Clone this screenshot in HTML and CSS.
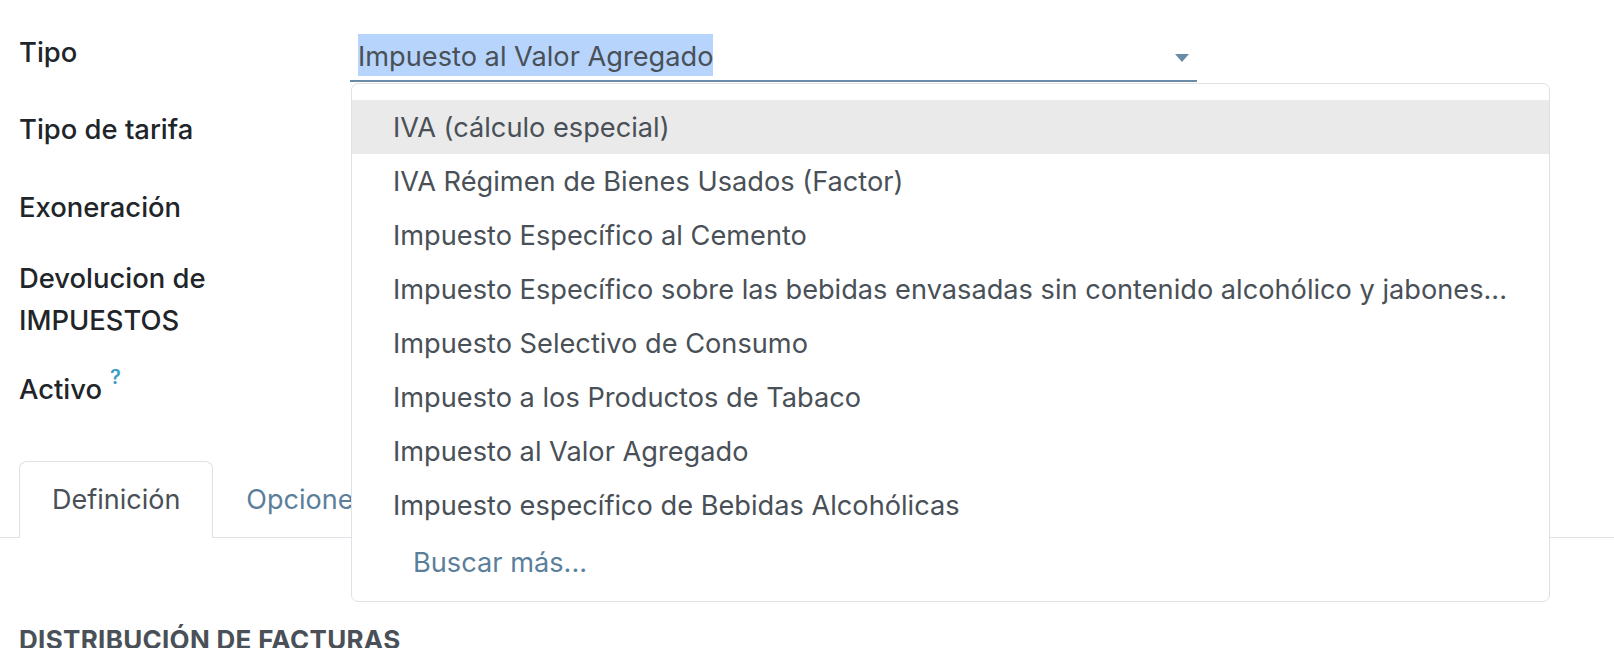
FILE: index.html
```html
<!DOCTYPE html>
<html lang="es">
<head>
<meta charset="utf-8">
<title>Impuesto</title>
<link rel="stylesheet" href="styles.css">
</head>
<body>
<div class="sheet">
  <div class="fields">
    <div class="row row-tipo">
      <label class="lbl">Tipo</label>
      <div class="m2o">
        <span class="m2o-value">Impuesto al Valor Agregado</span>
        <svg class="caret" width="14" height="8" viewBox="0 0 14 8"><polygon points="0,0 14,0 7,8" fill="#6a8ba5"/></svg>
        <ul class="dropdown">
          <li class="item active">IVA (cálculo especial)</li>
          <li class="item">IVA Régimen de Bienes Usados (Factor)</li>
          <li class="item">Impuesto Específico al Cemento</li>
          <li class="item">Impuesto Específico sobre las bebidas envasadas sin contenido alcohólico y jabones...</li>
          <li class="item">Impuesto Selectivo de Consumo</li>
          <li class="item">Impuesto a los Productos de Tabaco</li>
          <li class="item">Impuesto al Valor Agregado</li>
          <li class="item">Impuesto específico de Bebidas Alcohólicas</li>
          <li class="item more">Buscar más...</li>
        </ul>
      </div>
    </div>
    <div class="row row-tarifa">
      <label class="lbl">Tipo de tarifa</label>
      <div class="field"></div>
    </div>
    <div class="row row-exo">
      <label class="lbl">Exoneración</label>
      <div class="field"></div>
    </div>
    <div class="row row-dev">
      <label class="lbl">Devolucion de IMPUESTOS</label>
      <div class="field"></div>
    </div>
    <div class="row row-act">
      <label class="lbl">Activo<sup class="help">?</sup></label>
      <div class="field"></div>
    </div>
  </div>
  <ul class="tabs">
    <li class="tab active">Definición</li>
    <li class="tab">Opciones avanzadas</li>
  </ul>
  <h3 class="section">DISTRIBUCIÓN DE FACTURAS</h3>
</div>
</body>
</html>
```
FILE: styles.css
```css
* { box-sizing: border-box; }
html, body { margin: 0; padding: 0; background: #fff; }
body {
  font-family: Inter, "Noto Sans", "Liberation Sans", sans-serif;
  color: #212529;
  overflow: hidden;
}
.sheet { padding-top: 31px; }
.fields { padding-left: 19px; display: flex; flex-direction: column; }
.row {
  display: grid;
  grid-template-columns: 331px 847px;
  align-items: start;
}
.lbl {
  font-size: 27.4px;
  font-weight: 500;
  line-height: 42px;
  color: #212529;
}
.row-tipo { height: 77px; position: relative; z-index: 5; }
.row-tarifa { height: 78px; }
.row-exo { height: 71px; }
.row-dev { height: 111px; }
.row-act { height: 42px; }
.help {
  font-size: 20px;
  font-weight: 600;
  color: #3b9fc1;
  margin-left: 8px;
  vertical-align: 15px;
  line-height: 0;
}
.m2o {
  position: relative;
  margin-top: 3px;
  display: flex;
  align-items: center;
  padding: 0 8px 4px 8px;
  border-bottom: 2px solid #6a8ba5;
}
.m2o-value {
  display: inline-block;
  height: 42px;
  padding-top: 4px;
  background: #b7d5fc;
  font-size: 27.2px;
  line-height: 38px;
  color: #495057;
}
.caret { margin-left: auto; margin-top: 5px; }
.dropdown {
  position: absolute;
  top: calc(100% + 3px);
  left: 1px;
  width: 1199px;
  margin: 0;
  padding: 16px 0 12px;
  list-style: none;
  background: #fff;
  border: 1px solid #dee2e6;
  border-radius: 7px;
}
.item {
  height: 54px;
  line-height: 56px;
  padding-left: 41px;
  font-size: 27.2px;
  color: #495057;
  white-space: nowrap;
  overflow: hidden;
}
.item.active { background: #eaeaea; }
.item.more { margin-top: 3px; padding-left: 61px; color: #5b7f9b; }
.tabs {
  display: flex;
  list-style: none;
  margin: 51px 0 0;
  padding: 0 0 0 19px;
  border-bottom: 1px solid #dee2e6;
}
.tab {
  padding: 17px 32px;
  line-height: 42px;
  font-size: 27px;
  color: #5b7f9b;
  border: 1px solid transparent;
  border-bottom: 0;
  border-radius: 8px 8px 0 0;
  margin-bottom: -1px;
}
.tab.active {
  color: #495057;
  background: #fff;
  border-color: #dee2e6;
}
.section {
  margin: 87px 0 0 19px;
  font-size: 26px;
  letter-spacing: 0.3px;
  font-weight: 700;
  line-height: 30px;
  color: #495057;
}
```
